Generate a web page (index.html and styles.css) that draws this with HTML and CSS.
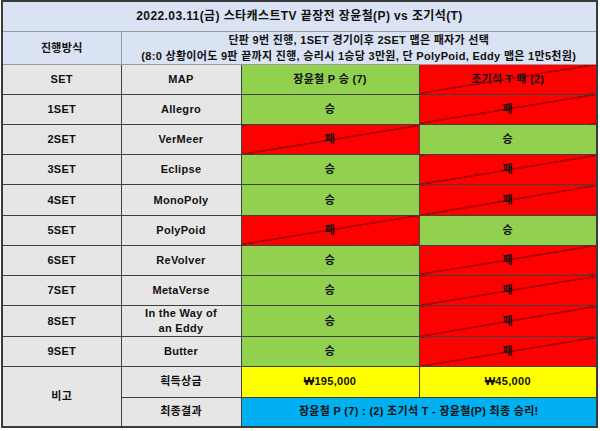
FILE: index.html
```html
<!DOCTYPE html>
<html lang="ko">
<head>
<meta charset="utf-8">
<link rel="stylesheet" href="styles.css">
</head>
<body>
<table class="sheet">
  <colgroup>
    <col class="c1"><col class="c2"><col class="c3"><col class="c4">
  </colgroup>
  <tr class="head">
    <td class="title" colspan="4">2022.03.11(금) 스타캐스트TV 끝장전 장윤철(P) vs 조기석(T)</td>
  </tr>
  <tr class="head rules">
    <td>진행방식</td>
    <td colspan="3">단판 9번 진행, 1SET 경기이후 2SET 맵은 패자가 선택<br>(8:0 상황이어도 9판 끝까지 진행, 승리시 1승당 3만원, 단 PolyPoid, Eddy 맵은 1만5천원)</td>
  </tr>
  <tr>
    <td class="gray">SET</td><td class="gray">MAP</td>
    <td class="win">장윤철 P 승 (7)</td><td class="lose">조기석 T 패 (2)</td>
  </tr>
  <tr><td class="gray">1SET</td><td class="gray">Allegro</td><td class="win">승</td><td class="lose">패</td></tr>
  <tr><td class="gray">2SET</td><td class="gray">VerMeer</td><td class="lose">패</td><td class="win">승</td></tr>
  <tr><td class="gray">3SET</td><td class="gray">Eclipse</td><td class="win">승</td><td class="lose">패</td></tr>
  <tr><td class="gray">4SET</td><td class="gray">MonoPoly</td><td class="win">승</td><td class="lose">패</td></tr>
  <tr><td class="gray">5SET</td><td class="gray">PolyPoid</td><td class="lose">패</td><td class="win">승</td></tr>
  <tr><td class="gray">6SET</td><td class="gray">ReVolver</td><td class="win">승</td><td class="lose">패</td></tr>
  <tr><td class="gray">7SET</td><td class="gray">MetaVerse</td><td class="win">승</td><td class="lose">패</td></tr>
  <tr><td class="gray">8SET</td><td class="gray">In the Way of<br>an Eddy</td><td class="win">승</td><td class="lose">패</td></tr>
  <tr><td class="gray">9SET</td><td class="gray">Butter</td><td class="win">승</td><td class="lose">패</td></tr>
  <tr>
    <td class="gray" rowspan="2">비고</td><td class="gray">획득상금</td>
    <td class="prize">₩195,000</td><td class="prize">₩45,000</td>
  </tr>
  <tr>
    <td class="gray">최종결과</td>
    <td class="final" colspan="2">장윤철 P (7) : (2) 조기석 T - 장윤철(P) 최종 승리!</td>
  </tr>
</table>
</body>
</html>
```
FILE: styles.css
```css
html, body {
  margin: 0;
  padding: 0;
  background: #ffffff;
}
body {
  font-family: "Liberation Sans", "Noto Sans CJK KR", sans-serif;
  font-weight: bold;
  font-size: 11px;
  letter-spacing: 0.3px;
  color: #111;
}
.sheet {
  margin: 0 0 0 1px;
  border-collapse: collapse;
  table-layout: fixed;
  width: 597px;
  border: 2px solid #3a3a3a;
}
.c1 { width: 119px; }
.c2 { width: 120px; }
.c3 { width: 178px; }
.c4 { width: 178px; }
.sheet tr { height: 30.2px; }
.sheet td {
  border: 1px solid #404040;
  text-align: center;
  vertical-align: middle;
  padding: 0;
  line-height: 15px;
}
.head td {
  background: #dae3f3;
  border-color: #9a9a9a;
}
.sheet .title {
  font-size: 12px;
  letter-spacing: 0.4px;
}
.rules td { line-height: 16px; }
.gray { background: #e7e6e6; }
.win { background: #92d050; }
.lose {
  background:
    linear-gradient(to bottom right, transparent calc(50% - 0.7px), #2a0000 50%, transparent calc(50% + 0.7px)),
    #ff0000;
}
.prize { background: #ffff00; }
.final { background: #00b0f0; }
```
